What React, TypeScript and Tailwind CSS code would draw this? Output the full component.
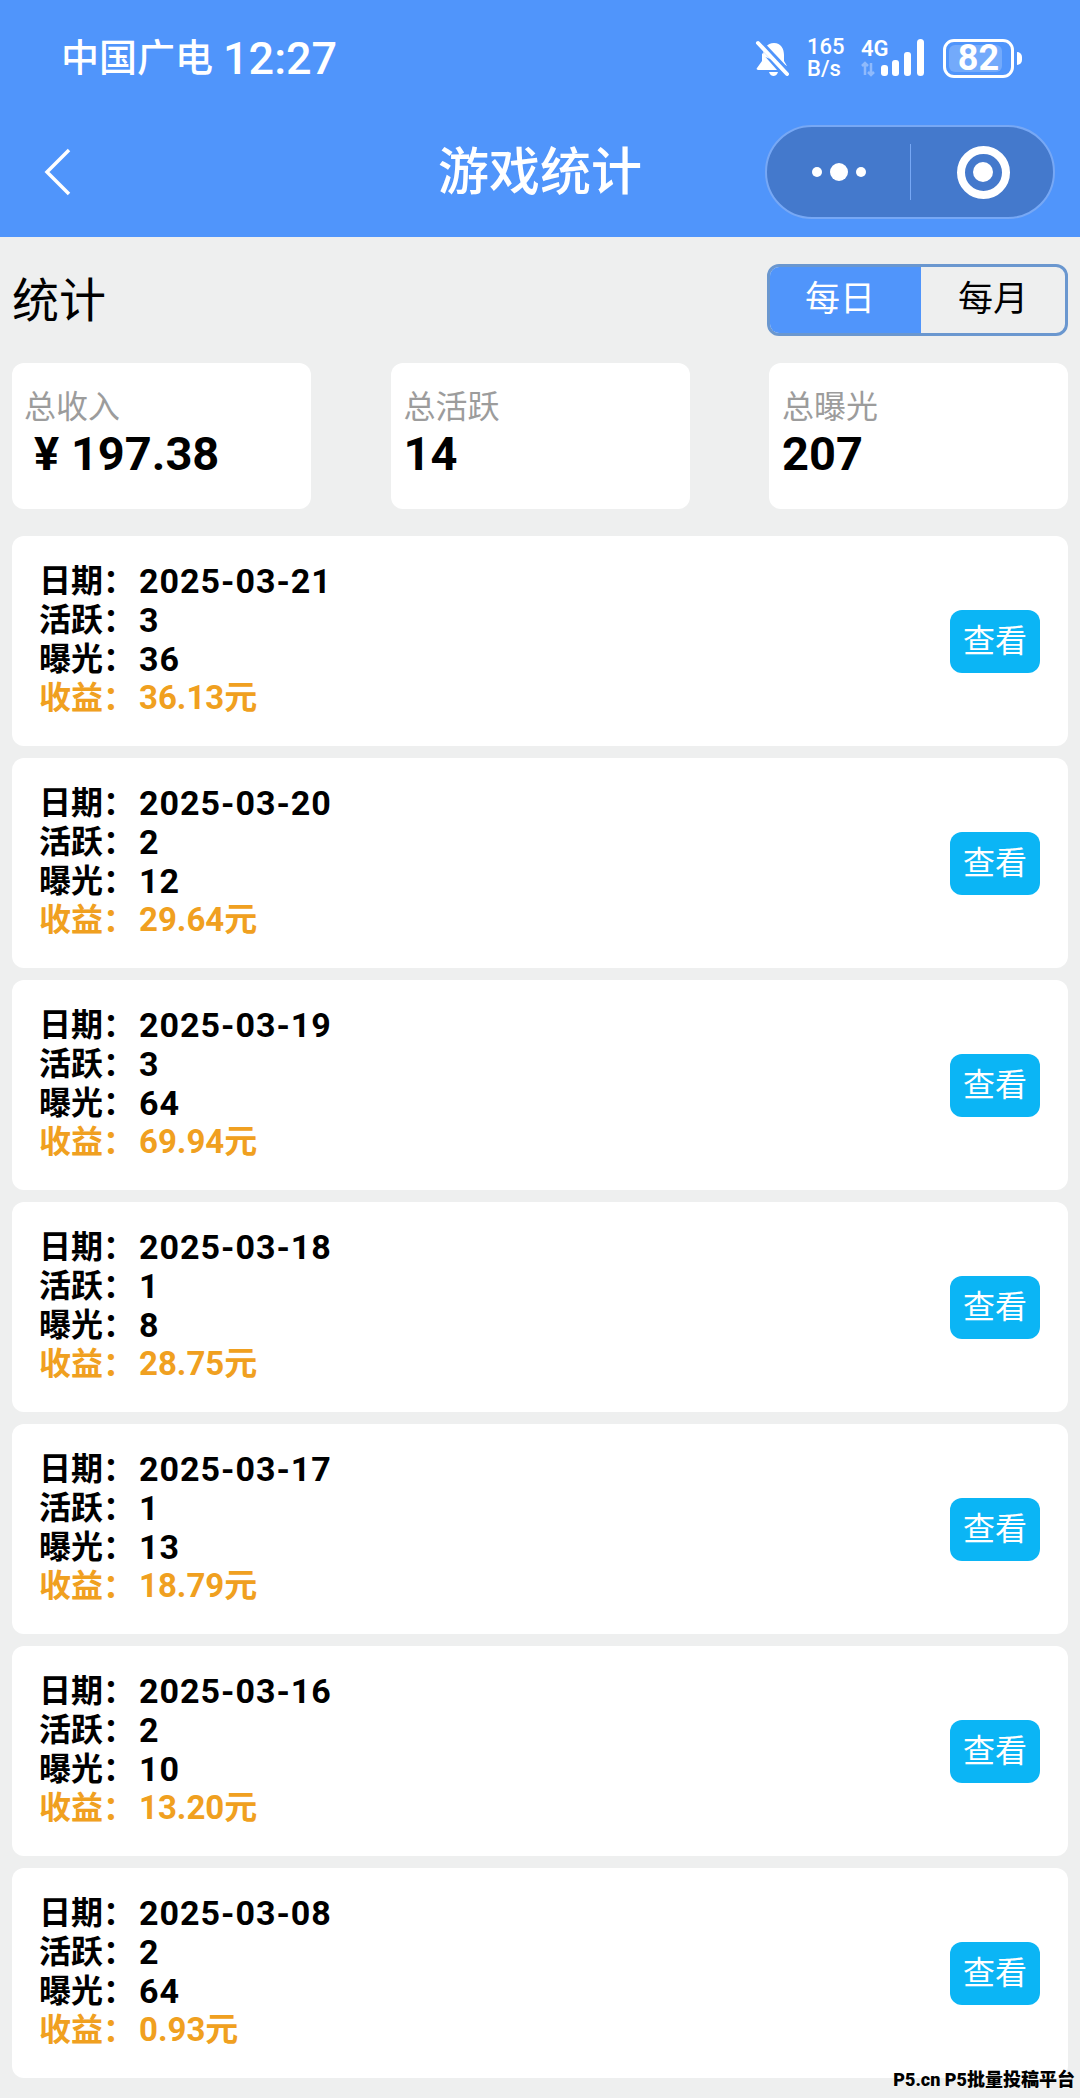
const font = "font-['Roboto','Noto_Sans_CJK_SC',sans-serif]";

const stats = [
  { label: '总收入', value: '¥ 197.38', indent: true },
  { label: '总活跃', value: '14', indent: false },
  { label: '总曝光', value: '207', indent: false },
];

const rows = [
  { date: '2025-03-21', active: '3', views: '36', income: '36.13元' },
  { date: '2025-03-20', active: '2', views: '12', income: '29.64元' },
  { date: '2025-03-19', active: '3', views: '64', income: '69.94元' },
  { date: '2025-03-18', active: '1', views: '8', income: '28.75元' },
  { date: '2025-03-17', active: '1', views: '13', income: '18.79元' },
  { date: '2025-03-16', active: '2', views: '10', income: '13.20元' },
  { date: '2025-03-08', active: '2', views: '64', income: '0.93元' },
];

function BellMuted() {
  return (
    <svg width="36" height="38" viewBox="0 0 36 38" fill="none">
      <path d="M8 17c0-7 4-13 11-13s10 6 10 12v6l3 5z" fill="white" />
      <path d="M7 14v8l-5 7c-1 1 0 2 1 2h19z" fill="white" />
      <path d="M14 33h9c-1 3-3 4-4.500 4s-3.500-1-4.500-4z" fill="white" />
      <path d="M3 2l31 33" stroke="#5095fb" strokeWidth="7" />
      <path d="M3 4l29 31" stroke="white" strokeWidth="4" strokeLinecap="round" />
    </svg>
  );
}

function StatusIcons() {
  return (
    <div className="flex items-center">
      <BellMuted />
      <div className="ml-[16px] w-[40px] text-[22px] leading-[22px] font-medium text-white">
        <div>165</div>
        <div>B/s</div>
      </div>
      <div className="relative ml-[14px] h-[38px] w-[70px]">
        <span className="absolute left-0 top-[-1px] text-[22px] leading-[22px] font-semibold text-white">4G</span>
        <svg className="absolute left-0 top-0" width="70" height="38" viewBox="0 0 70 38">
          <path d="M4 36v-12m-3 3l3-3 3 3M10 24v12m-3-3l3 3 3-3" stroke="#8fbafc" strokeWidth="2.500" fill="none" />
          <rect x="20" y="26" width="7" height="11" rx="3" fill="white" />
          <rect x="31" y="21" width="7" height="16" rx="3" fill="white" />
          <rect x="43" y="13" width="7" height="24" rx="3" fill="white" />
          <rect x="56" y="0" width="7" height="37" rx="3.500" fill="white" />
        </svg>
      </div>
      <div className="ml-[12px] flex items-center">
        <div className="relative flex h-[39px] w-[71px] items-center justify-center overflow-hidden rounded-[11px] border-[3px] border-white">
          <div className="absolute inset-y-[3px] left-[3px] w-[53px] rounded-[6px] bg-white/20" />
          <span className="relative text-[36px] leading-none font-bold text-white">82</span>
        </div>
        <div className="ml-[3px] h-[13px] w-[5px] rounded-r-full bg-white" />
      </div>
    </div>
  );
}

function Header() {
  return (
    <div className="h-[237px] bg-[#5095fb]">
      <div className="flex h-[116px] items-center justify-between pl-[61px] pr-[58px] text-white">
        <div className="flex items-center">
          <span className="text-[38px] leading-none font-medium">中国广电</span>
          <span className="ml-[10px] text-[45px] leading-none font-medium">12:27</span>
        </div>
        <StatusIcons />
      </div>
      <div className="relative flex h-[112px] items-center justify-between pl-[44px] pr-[25px]">
        <svg width="28" height="48" viewBox="0 0 28 48" fill="none">
          <path d="M25 2L3 24l22 22" stroke="white" strokeWidth="3.500" />
        </svg>
        <span className="absolute left-0 right-0 text-center text-[51px] leading-none font-medium text-white">
          游戏统计
        </span>
        <div className="relative flex h-[94px] w-[290px] items-center rounded-full border-2 border-[#77a8f5] bg-[#4479cc]">
          <div className="flex w-[143px] items-center justify-center gap-[8px]">
            <div className="h-[10px] w-[10px] rounded-full bg-white" />
            <div className="h-[18px] w-[18px] rounded-full bg-white" />
            <div className="h-[10px] w-[10px] rounded-full bg-white" />
          </div>
          <div className="h-[56px] w-[1px] bg-[#77a8f5]" />
          <div className="flex flex-1 items-center justify-center pl-[2px]">
            <div className="flex h-[53px] w-[53px] items-center justify-center rounded-full border-[8px] border-white">
              <div className="h-[20px] w-[20px] rounded-full bg-white" />
            </div>
          </div>
        </div>
      </div>
    </div>
  );
}

function RecordRow({ date, active, views, income }: (typeof rows)[number]) {
  const line = 'flex h-[39px] items-center text-[32px] leading-none font-bold';
  const value = 'text-[34px] tracking-[1px]';
  return (
    <div className="flex h-[210px] items-center justify-between rounded-[12px] bg-white pb-[4px] pl-[27px] pr-[28px]">
      <div className="text-black">
        <div className={line}>
          <span className="w-[100px]">日期：</span>
          <span className={value}>{date}</span>
        </div>
        <div className={line}>
          <span className="w-[100px]">活跃：</span>
          <span className={value}>{active}</span>
        </div>
        <div className={line}>
          <span className="w-[100px]">曝光：</span>
          <span className={value}>{views}</span>
        </div>
        <div className={`${line} text-[#f0a020]`}>
          <span className="w-[100px]">收益：</span>
          <span className="text-[33px]">{income}</span>
        </div>
      </div>
      <button className="mt-[4px] h-[63px] w-[90px] rounded-[12px] bg-[#0bb5f5] text-[32px] text-white">查看</button>
    </div>
  );
}

export default function App() {
  return (
    <div className={`relative h-[2098px] w-[1080px] overflow-hidden bg-[#eeefef] ${font}`}>
      <Header />
      <div className="flex flex-col gap-[27px] px-3 pt-[27px]">
        <div className="flex h-[72px] items-center justify-between">
          <h1 className="text-[47px] leading-none font-normal text-black">统计</h1>
          <div className="flex h-[72px] w-[301px] overflow-hidden rounded-[12px] border-[3px] border-[#6a97cf] text-[35px]">
            <div className="m-[-3px] mr-0 flex w-[154px] items-center justify-center bg-[#5095fb] pr-[8px] text-white">
              每日
            </div>
            <div className="flex flex-1 items-center justify-center text-black">每月</div>
          </div>
        </div>
        <div className="flex justify-between">
          {stats.map((s) => (
            <div key={s.label} className="h-[146px] w-[299px] rounded-[12px] bg-white pl-[13px] pt-[24px]">
              <div className={`h-[40px] text-[32px] leading-[40px] text-[#9c9c9c] ${s.indent ? 'ml-[-1px]' : ''}`}>
                {s.label}
              </div>
              <div
                className={`h-[54px] text-[47px] leading-[54px] font-bold text-black ${s.indent ? 'pl-[9px]' : ''}`}
              >
                {s.value}
              </div>
            </div>
          ))}
        </div>
        <div className="flex flex-col gap-[12px]">
          {rows.map((r) => (
            <RecordRow key={r.date} {...r} />
          ))}
        </div>
      </div>
      <div className="absolute bottom-[7px] right-[5px] text-[18px] leading-[22px] font-black text-black [text-shadow:0_0_2px_white]">
        P5.cn P5批量投稿平台
      </div>
    </div>
  );
}
